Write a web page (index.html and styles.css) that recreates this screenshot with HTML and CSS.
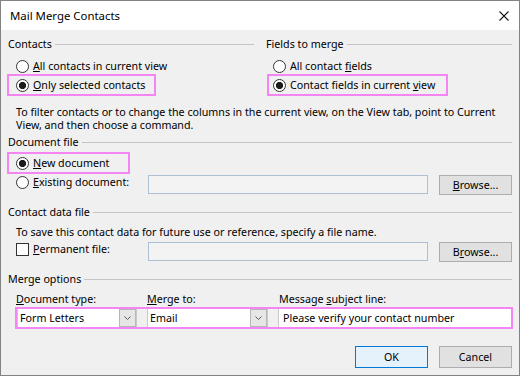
FILE: index.html
```html
<!DOCTYPE html>
<html lang="en">
<head>
<meta charset="utf-8">
<title>Mail Merge Contacts</title>
<link rel="stylesheet" href="styles.css">
</head>
<body>
<div class="window">
  <div class="titlebar">
    <span class="title">Mail Merge Contacts</span>
    <svg class="close" width="10" height="10" viewBox="0 0 10 10" aria-label="Close"><path d="M0.5 0.5L9.5 9.5M9.5 0.5L0.5 9.5" stroke="#1a1a1a" stroke-width="1.1" fill="none"/></svg>
  </div>
  <div class="body">
    <div class="top-grid">
      <section class="group">
        <div class="group-head"><span>Contacts</span><i class="rule"></i></div>
        <div class="opt opt-l first"><span class="radio"></span><span><u>A</u>ll contacts in current view</span></div>
        <div class="opt opt-l hl hl-contacts"><span class="radio on"></span><span><u>O</u>nly selected contacts</span></div>
      </section>
      <section class="group">
        <div class="group-head"><span>Fields to merge</span><i class="rule"></i></div>
        <div class="opt opt-r first"><span class="radio"></span><span>All contact <u>f</u>ields</span></div>
        <div class="opt opt-r hl hl-fields"><span class="radio on"></span><span>Contact fields in current <u>v</u>iew</span></div>
      </section>
    </div>

    <p class="note note-filter">To filter contacts or to change the columns in the current view, on the View tab, point to Current<br>View, and then choose a command.</p>

    <div class="group-head head-doc"><span>Document file</span><i class="rule"></i></div>
    <div class="opt opt-l hl hl-newdoc"><span class="radio on"></span><span><u>N</u>ew document</span></div>
    <div class="file-row file-row-doc">
      <div class="opt opt-l opt-fixed"><span class="radio"></span><span><u>E</u>xisting document:</span></div>
      <div class="field"></div>
      <div class="btn btn-browse"><u>B</u>rowse...</div>
    </div>

    <div class="group-head head-data"><span>Contact data file</span><i class="rule"></i></div>
    <p class="note note-save">To save this contact data for future use or reference, specify a file name.</p>
    <div class="file-row file-row-perm">
      <div class="opt opt-l opt-fixed"><span class="check"></span><span><u>P</u>ermanent file:</span></div>
      <div class="field"></div>
      <div class="btn btn-browse">B<u>r</u>owse...</div>
    </div>

    <div class="group-head head-merge"><span>Merge options</span><i class="rule"></i></div>
    <div class="merge-labels">
      <span><u>D</u>ocument type:</span>
      <span><u>M</u>erge to:</span>
      <span>Message <u>s</u>ubject line:</span>
    </div>
    <div class="merge-controls">
      <div class="combo"><span class="combo-text">Form Letters</span><span class="dd"><svg width="7" height="4" viewBox="0 0 7 4"><path d="M0.5 0.5L3.5 3.5L6.5 0.5" stroke="#5a5a5a" stroke-width="1" fill="none"/></svg></span></div>
      <div class="combo"><span class="combo-text">Email</span><span class="dd"><svg width="7" height="4" viewBox="0 0 7 4"><path d="M0.5 0.5L3.5 3.5L6.5 0.5" stroke="#5a5a5a" stroke-width="1" fill="none"/></svg></span></div>
      <div class="subject">Please verify your contact number</div>
    </div>

    <div class="actions">
      <div class="btn btn-ok">OK</div>
      <div class="btn btn-cancel">Cancel</div>
    </div>
  </div>
</div>
</body>
</html>
```

FILE: styles.css
```css
html, body {
  margin: 0;
  padding: 0;
}

body {
  font-family: "Noto Sans", "Open Sans", sans-serif;
  font-size: 10.7px;
  color: #000;
  background: #f0f0f0;
}

.window {
  width: 520px;
  height: 376px;
  box-sizing: border-box;
  border: 1px solid #828282;
  display: flex;
  flex-direction: column;
  background: #f0f0f0;
}

.titlebar {
  flex: none;
  height: 29px;
  background: #fff;
  display: flex;
  align-items: center;
  justify-content: space-between;
  padding: 0 10px 0 9px;
}

.title {
  font-size: 11.4px;
  line-height: 29px;
  color: #000;
}

.close {
  display: block;
}

.body {
  flex: 1;
  padding: 0 7px;
  line-height: 18px;
}

u {
  text-decoration: underline;
  text-underline-offset: 1px;
}

.top-grid {
  display: grid;
  grid-template-columns: 246px 246px;
  column-gap: 12px;
  margin-top: 6px;
}

.group-head {
  display: flex;
  align-items: center;
  height: 16px;
  line-height: 16px;
  gap: 3px;
  white-space: nowrap;
}

.rule {
  flex: 1;
  height: 1px;
  background: #c4c4c4;
}

.opt {
  display: flex;
  align-items: center;
  height: 18px;
  gap: 4px;
  white-space: nowrap;
  box-sizing: border-box;
}

.opt.first {
  margin-top: 5px;
}

.opt-l {
  margin-left: 1px;
  padding-left: 7px;
}

.opt-r {
  margin-left: 3px;
  padding-left: 4px;
}

.hl {
  outline: 2px solid #f585f2;
  margin-top: 1px;
}

.hl-contacts {
  width: 145px;
}

.hl-fields {
  width: 177px;
}

.hl-newdoc {
  width: 119px;
  margin-top: 4px;
}

.radio {
  flex: none;
  width: 13px;
  height: 13px;
  box-sizing: border-box;
  border: 1px solid #333;
  border-radius: 50%;
  background: #fff;
}

.radio.on {
  background: radial-gradient(circle, #1b1b1b 0 3.3px, #fff 3.9px);
}

.check {
  flex: none;
  width: 13px;
  height: 13px;
  box-sizing: border-box;
  border: 1px solid #333;
  background: #fff;
}

.note {
  margin: 0 0 0 8px;
  line-height: 12px;
  white-space: nowrap;
}

.note-filter {
  margin-top: 12px;
  line-height: 13px;
}

.head-doc {
  margin-top: 2px;
}

.file-row {
  display: flex;
  align-items: flex-start;
  padding-left: 1px;
}

.file-row-doc {
  margin-top: 1px;
}

.file-row-perm {
  margin-top: 2px;
}

.opt-fixed {
  margin-left: 0;
  width: 139px;
  flex: none;
}

.field {
  flex: none;
  width: 280px;
  height: 19px;
  margin-top: 2px;
  box-sizing: border-box;
  border: 1px solid #adbfd2;
  background: #f3f3f3;
}

.btn {
  flex: none;
  width: 73px;
  box-sizing: border-box;
  text-align: center;
  border: 1px solid #adadad;
  background: #e1e1e1;
}

.btn-browse {
  height: 20px;
  line-height: 18px;
  margin-top: 2px;
  margin-left: 11px;
}

.head-data {
  margin-top: 9px;
}

.note-save {
  margin-top: 6px;
}

.head-merge {
  margin-top: 9px;
}

.merge-labels {
  display: grid;
  grid-template-columns: 131px 132px 1fr;
  margin: 6px 0 0 8px;
  line-height: 12px;
  white-space: nowrap;
}

.merge-controls {
  display: grid;
  grid-template-columns: 120px 121px 1fr;
  column-gap: 10px;
  width: 498px;
  height: 22px;
  box-sizing: border-box;
  margin: 2px 0 0 7px;
  border: 2px solid #f585f2;
}

.combo {
  display: flex;
  background: #fff;
  border-style: solid;
  border-color: #c9c9c9;
  border-width: 0 1px;
  min-width: 0;
}

.combo-text {
  flex: 1;
  padding-left: 2px;
  white-space: nowrap;
  overflow: hidden;
}

.dd {
  flex: none;
  width: 17px;
  box-sizing: border-box;
  border: 1px solid #b7b7b7;
  background: #e6e6e6;
  display: flex;
  align-items: center;
  justify-content: center;
}

.dd svg {
  display: block;
}

.subject {
  background: #fff;
  border-left: 1px solid #c9c9c9;
  padding-left: 4px;
  white-space: nowrap;
  overflow: hidden;
}

.actions {
  display: flex;
  justify-content: flex-end;
  gap: 11px;
  margin-top: 17px;
}

.btn-ok,
.btn-cancel {
  height: 22px;
  line-height: 20px;
}

.btn-ok {
  background: #e5f1fb;
  border-color: #0078d7;
}
```
